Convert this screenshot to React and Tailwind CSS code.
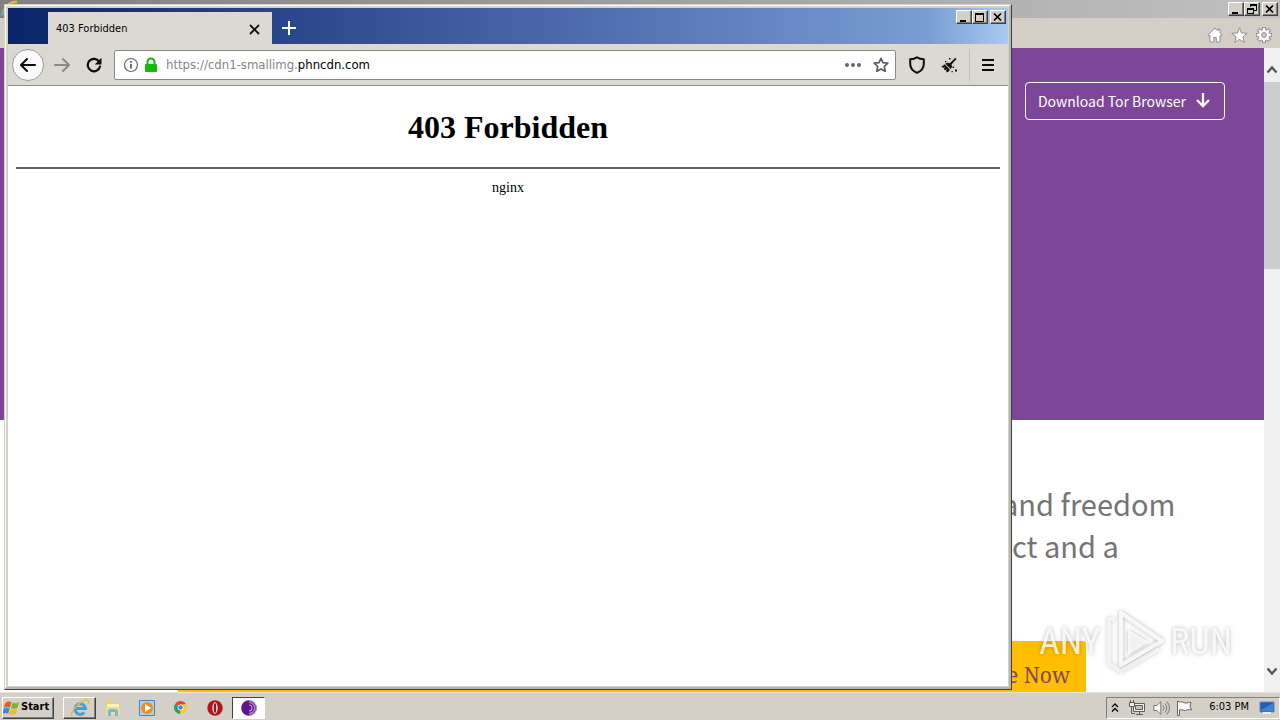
import React from "react";

const ui = "font-['Tahoma','DejaVu_Sans_Condensed','DejaVu_Sans',sans-serif]";
const raised =
  "border border-t-white border-l-white border-r-[#404040] border-b-[#404040] bg-[#d4d0c8] shadow-[inset_-1px_-1px_0_#808080]";

function CaptionButton({ label, className = "", children }) {
  return (
    <button aria-label={label} className={`h-3.5 w-4 flex items-center justify-center ${raised} ${className}`}>
      <svg width="12" height="11" viewBox="0 0 12 11" shapeRendering="crispEdges">{children}</svg>
    </button>
  );
}

const minimise = <path d="M2 8h6v2H2z" fill="#000" />;
const maximise = <path d="M1 1h9v9H1zM2 3v6h7V3z" fill="#000" fillRule="evenodd" />;
const restore = (
  <path d="M4 0h7v7H8V6h2V2H5v1H4zM1 4h7v6H1zM2 6v3h5V6z" fill="#000" fillRule="evenodd" />
);
const cross = <path d="M2 1.5l7 7M9 1.5l-7 7" stroke="#000" strokeWidth="1.7" shapeRendering="auto" />;

function BackgroundBrowser() {
  return (
    <section className="flex flex-1 flex-col bg-white">
      <header className="flex h-[18px] items-center justify-end bg-gradient-to-r from-[#808080] to-[#c0c0c0] pr-0.5">
        <svg className="mr-auto" width="20" height="18" viewBox="0 0 20 18" fill="none">
          <path d="M2 15C5 6 11 1 17 2" stroke="#e8b92c" strokeWidth="2.5" />
          <path d="M1 16C5 8 9 5 13 4" stroke="#4ba4e0" strokeWidth="1.5" />
        </svg>
        <CaptionButton label="Minimize">{minimise}</CaptionButton>
        <CaptionButton label="Restore">{restore}</CaptionButton>
        <CaptionButton label="Close" className="ml-0.5">{cross}</CaptionButton>
      </header>
      <nav className="flex h-[30px] items-center justify-end gap-2 bg-[#d4cec7] pt-1 pr-2">
        <button aria-label="Home">
          <svg width="16" height="16" viewBox="0 0 16 16">
            <path d="M8 1L.8 8l1.300 1.300.9-.8V15h3.700v-4.500h2.600V15H13V8.400l.9.8L15.200 8 13 5.800V2h-2v2z" fill="#fff" stroke="#8b8884" strokeWidth=".9" />
          </svg>
        </button>
        <button aria-label="Favorites">
          <svg width="17" height="17" viewBox="0 0 17 17">
            <path d="M8.500.8l2 5.200 5.700.3-4.400 3.600 1.500 5.600-4.800-3.100-4.800 3.100 1.500-5.600L.8 6.300 6.500 6z" fill="#fff" stroke="#8b8884" strokeWidth=".9" />
          </svg>
        </button>
        <button aria-label="Tools">
          <svg width="16" height="16" viewBox="0 0 16 16" fill="none">
            <path d="M8 0v16M0 8h16M2.300 2.300l11.400 11.400M13.700 2.300L2.300 13.700" stroke="#8b8884" strokeWidth="4" />
            <circle cx="8" cy="8" r="6" fill="#8b8884" />
            <path d="M8 .8v14.400M.8 8h14.400M3 3l10 10M13 3L3 13" stroke="#fff" strokeWidth="2.300" />
            <circle cx="8" cy="8" r="5.200" fill="#fff" />
            <circle cx="8" cy="8" r="2.400" fill="#d4cec7" stroke="#8b8884" />
          </svg>
        </button>
      </nav>
      <div className="flex flex-1">
        <main className="relative flex flex-1 flex-col overflow-hidden font-['Noto_Sans_CJK_SC',sans-serif]">
          <div className="flex h-[372px] items-start justify-end bg-[#7d4698] pt-[34px] pr-[39px]">
            <button className="flex h-[38px] items-center gap-2 rounded-[4px] border border-white px-3 text-[14px] text-white">
              Download Tor Browser
              <svg width="18" height="18" viewBox="0 0 18 18" fill="none" stroke="#fff" strokeWidth="2.300">
                <path d="M9 1v13M3 8l6 6 6-6" />
              </svg>
            </button>
          </div>
          <p className="ml-auto w-[264px] pt-[62px] text-[29px] leading-[42px] text-[#747474]">
            <span className="block pl-0.5">and freedom</span>
            <span className="block pl-3">ct and a</span>
          </p>
          <div className="mt-auto mr-[178px] ml-[178px] flex h-[51px] items-end justify-end rounded-t-[3px] bg-[#ffbf00] px-4 pb-[3px] font-['Noto_Serif','Source_Serif_Pro','Liberation_Serif',serif] text-[21px] leading-7 text-[#84465e]">
            <a href="#donate">Donate Now</a>
          </div>
        </main>
        <aside className="flex w-4 flex-col items-center bg-[#f0f0f0]">
          <button aria-label="Scroll up" className="flex h-[34px] items-end pb-2">
            <svg width="12" height="9" viewBox="0 0 12 9" fill="none"><path d="M1.500 7.500L6 2.500l4.500 5" stroke="#505050" strokeWidth="2.200" /></svg>
          </button>
          <div className="h-[187px] w-full bg-[#cdcdcd]" />
          <button aria-label="Scroll down" className="mt-auto flex h-7 items-start">
            <svg width="12" height="13" viewBox="0 0 12 13" fill="none"><path d="M1.500 4.500L6 9.500l4.500-5" stroke="#505050" strokeWidth="2.200" /></svg>
          </button>
        </aside>
      </div>
    </section>
  );
}

function ForegroundBrowser() {
  return (
    <section className="absolute top-1 right-[268px] bottom-[30px] left-1 flex flex-col border border-t-[#d4d0c8] border-r-[#404040] border-b-[#404040] border-l-[#d4d0c8] bg-white">
      <div className="flex flex-1 flex-col border-t border-r-2 border-b-2 border-l border-t-white border-r-[#b8b5ae] border-b-[#b8b5ae] border-l-white">
        <div className="flex flex-1 flex-col border-t-2 border-r border-b border-l-2 border-[#d4d0c8] bg-white">
          <header className="flex h-9 items-end bg-[linear-gradient(to_right,#0a246a,#4a68ab_55%,#7a9dd4_92%,#a6caf0)]">
            <div className={`ml-10 flex h-8 w-56 items-center justify-between bg-[#dcd9d3] px-2 pt-0.5 text-[11px] text-black ${ui}`}>
              <span>403 Forbidden</span>
              <button aria-label="Close tab" className="p-1">
                <svg width="11" height="11" viewBox="0 0 11 11"><path d="M1 1l9 9M10 1l-9 9" stroke="#111" strokeWidth="1.800" /></svg>
              </button>
            </div>
            <button aria-label="New tab" className="mb-[9px] ml-2.5">
              <svg width="14" height="14" viewBox="0 0 14 14"><path d="M7 0v14M0 7h14" stroke="#fff" strokeWidth="2" /></svg>
            </button>
            <div className="mr-0.5 ml-auto flex self-start pt-0.5">
              <CaptionButton label="Minimize">{minimise}</CaptionButton>
              <CaptionButton label="Maximize">{maximise}</CaptionButton>
              <CaptionButton label="Close" className="ml-0.5">{cross}</CaptionButton>
            </div>
          </header>
          <nav className="flex h-[42px] items-center border-b border-[#8f8d88] bg-[#dcd9d3] pt-px pr-3 pl-1">
            <button aria-label="Back" className="flex size-8 items-center justify-center rounded-full border border-[#9d9b97] bg-[#fafafa]">
              <svg width="16" height="16" viewBox="0 0 16 16" fill="none" stroke="#0c0c0d" strokeWidth="2" strokeLinecap="round" strokeLinejoin="round"><path d="M15 8H1.500M7 2L1 8l6 6" /></svg>
            </button>
            <button aria-label="Forward" className="ml-2.5">
              <svg width="16" height="16" viewBox="0 0 16 16" fill="none" stroke="#8b8985" strokeWidth="2" strokeLinecap="round" strokeLinejoin="round"><path d="M1 8h13.500M9 2l6 6-6 6" /></svg>
            </button>
            <button aria-label="Reload" className="ml-4">
              <svg width="16" height="16" viewBox="0 0 16 16" fill="none"><path d="M13.200 4.700A6.200 6.200 0 1 0 14 9.500" stroke="#0c0c0d" strokeWidth="2.200" strokeLinecap="round" /><path d="M15.500 .8v6.700H8.800z" fill="#0c0c0d" /></svg>
            </button>
            <div className="ml-3 flex h-[30px] flex-1 items-center rounded-[2px] border border-[#8a8986] bg-white pr-1.5 pl-2">
              <button aria-label="Site information">
                <svg width="16" height="16" viewBox="0 0 16 16" fill="none"><circle cx="8" cy="8" r="6.500" stroke="#666" strokeWidth="1.200" /><path d="M8 7v4.500M8 4v1.700" stroke="#555" strokeWidth="1.700" /></svg>
              </button>
              <svg className="ml-1" width="16" height="16" viewBox="0 0 16 16"><path d="M4.500 8V5a3.500 3.500 0 0 1 7 0v3" fill="none" stroke="#12bc00" strokeWidth="2" /><rect x="2" y="7" width="12" height="8" rx="1" fill="#12bc00" /></svg>
              <a href="https://cdn1-smallimg.phncdn.com" className={`ml-[7px] flex-1 text-[13px] text-[#858585] ${ui}`}>
                https://cdn1-smallimg.<span className="text-black">phncdn.com</span>
              </a>
              <button aria-label="Page actions"><svg width="16" height="16" viewBox="0 0 16 16" fill="#666"><circle cx="2" cy="8" r="2" /><circle cx="8" cy="8" r="2" /><circle cx="14" cy="8" r="2" /></svg></button>
              <button aria-label="Bookmark" className="ml-3">
                <svg width="16" height="16" viewBox="0 0 16 16" fill="none"><path d="M8 1.300l2 4.300 4.800.6-3.500 3.300.9 4.800L8 12l-4.200 2.300.9-4.800L1.200 6.200 6 5.600z" stroke="#5c5c5c" strokeWidth="1.700" strokeLinejoin="round" /></svg>
              </button>
            </div>
            <button aria-label="Security level" className="ml-3">
              <svg width="18" height="18" viewBox="0 0 18 18" fill="none"><path d="M9 1.200c2 1.500 4 2 6.800 2.100V8c0 4.500-2.500 7-6.800 8.800C4.700 15 2.200 12.500 2.200 8V3.300C5 3.200 7 2.700 9 1.200z" stroke="#0c0c0d" strokeWidth="2" strokeLinejoin="round" /></svg>
            </button>
            <button aria-label="New identity" className="ml-[15px]">
              <svg width="16" height="16" viewBox="0 0 16 16" fill="#111"><path d="M14.300.8l1.200 1.200-5 5.500c1 1.800.3 3.300-.8 4.500L4.300 6.800c1.300-1.200 3.200-1.500 4.500-.6z" /><path d="M3.700 7.200l5.300 5.500c-.5 1.200-2 2.200-3 2.900L5 14l1-2-2 1.300-1.300-1.300 1.600-2-2.200 1L.3 9.400c1.200-.3 2.400-1.200 3.400-2.200zM8 1h1.500v1.500H8zM4 4h1.300v1.300H4zM14 12.500h2v2h-2zM11.500 9.500H13V11h-1.500zM10.500 14h1.200v1.200h-1.200z" /></svg>
            </button>
            <div className="ml-3 h-8 w-px bg-[#c5c2bc]" />
            <button aria-label="Menu" className="ml-2.5">
              <svg width="16" height="16" viewBox="0 0 16 16"><path d="M2 3h12M2 8h12M2 13h12" stroke="#0c0c0d" strokeWidth="2" /></svg>
            </button>
          </nav>
          <main className="flex-1 px-2 pt-[23px] text-center font-['Liberation_Serif','Times_New_Roman',serif] text-black">
            <h1 className="text-[32px] leading-9 font-bold">403 Forbidden</h1>
            <hr className="mt-[22px] mb-2.5 border-t-2 border-[#606060]" />
            <p className="text-[14px] leading-[18px]">nginx</p>
          </main>
        </div>
      </div>
    </section>
  );
}

function Watermark() {
  return (
    <div className="pointer-events-none absolute right-12 bottom-[46px] flex h-[64px] w-[193px] items-center justify-between font-['Roboto_Condensed','Open_Sans_Condensed','Liberation_Sans_Narrow',sans-serif] text-[36px] text-white/80 drop-shadow-[0_0_2px_rgba(0,0,0,0.35)]">
      <span>ANY</span>
      <svg width="58" height="64" viewBox="0 0 58 64" fill="none" strokeLinejoin="round">
        <path d="M15 3l41 28-41 24z" stroke="#fff" strokeWidth="4" opacity=".85" />
        <path d="M23 21l18 11-18 11z" fill="#fff" stroke="#fff" strokeWidth="2" opacity=".8" />
        <path d="M8 9H3v45l12 7 38-22" stroke="#fff" strokeWidth="4" opacity=".6" />
      </svg>
      <span>RUN</span>
    </div>
  );
}

function Taskbar() {
  const task = "flex h-[22px] w-[33px] items-center justify-center";
  return (
    <footer className={`flex h-7 items-center border-t border-[#e6e3dd] bg-[#d4d0c8] pt-0.5 text-[11px] text-black ${ui}`}>
      <button className={`ml-0.5 flex h-[22px] w-[52px] items-center gap-px font-bold ${raised}`}>
        <svg width="17" height="16" viewBox="0 0 17 16">
          <path d="M2 3.500C4 1 6.500 1 8.500 2.200L7 7.600C5 6.400 2.700 6.800.8 8z" fill="#e45b24" />
          <path d="M9.500 2.700c2.300 1 4.500.8 6.700-.9l-1.500 5.600C12.600 9 10.300 9 8 7.900z" fill="#75b82a" />
          <path d="M.5 9c2-1.500 4.200-1.500 6.200-.4l-1.500 5.200c-2-1.100-4-1-6 .3z" fill="#3e8bd3" />
          <path d="M7.700 9c2.300 1 4.500.8 6.700-.7L13 13.600c-2 1.700-4.500 1.700-6.800.6z" fill="#f4be25" />
        </svg>
        Start
      </button>
      <button aria-label="Internet Explorer" className={`ml-[9px] ${task} ${raised}`}>
        <svg width="20" height="20" viewBox="0 0 20 20" fill="none"><path d="M5.500 10.500h10a5.300 5.300 0 1 0-1.200 4" stroke="#38a5df" strokeWidth="3" /><path d="M2 18.500C-1 14 13 0 18 2c1.200.5.800 2.500.2 3.500" stroke="#e6b93c" strokeWidth="1.500" /></svg>
      </button>
      <button aria-label="Windows Explorer" className={task}>
        <svg width="18" height="18" viewBox="0 0 18 18"><path d="M2 3l6-1 2 2h6v12H2z" fill="#edcf68" /><path d="M3 5h12v4H3z" fill="#fcf2bd" /><path d="M2 8h14v8H2z" fill="#f3dc83" /><path d="M4 17v-5c0-3 10-3 10 0v5h-3v-4H7v4z" fill="#6fb9dc" /></svg>
      </button>
      <button aria-label="Media Player" className={`ml-px ${task}`}>
        <svg width="18" height="18" viewBox="0 0 18 18"><path d="M1.500 1.500h15v15h-15z" fill="#a9d4ef" stroke="#4785b5" /><circle cx="9" cy="9" r="6" fill="#f38a1d" /><path d="M7 5l6 4-6 4z" fill="#fff" /></svg>
      </button>
      <button aria-label="Chrome" className={`ml-px ${task}`}>
        <svg width="13" height="13" viewBox="0 0 16 16"><path d="M8 8L1.100 4A8 8 0 0 1 15 4z" fill="#e34335" /><path d="M8 8L1.100 4A8 8 0 0 0 8 16l3.500-6z" fill="#2e9e50" /><path d="M8 8l-.5 8A8 8 0 0 0 15 4H8z" fill="#f8ca38" /><circle cx="8" cy="8" r="3.600" fill="#fff" /><circle cx="8" cy="8" r="2.800" fill="#4285e8" /></svg>
      </button>
      <button aria-label="Opera" className={`ml-px ${task}`}>
        <svg width="16" height="16" viewBox="0 0 16 16"><circle cx="8" cy="8" r="7.700" fill="#b41519" /><ellipse cx="8" cy="8" rx="2.600" ry="5.700" fill="#fff" /><ellipse cx="8" cy="8" rx="1.300" ry="5" fill="#a11317" /></svg>
      </button>
      <button aria-label="Tor Browser" className={`ml-px ${task} border border-t-[#404040] border-r-white border-b-white border-l-[#404040] bg-white`}>
        <svg width="16" height="16" viewBox="0 0 16 16" fill="none"><circle cx="8" cy="8" r="7.800" fill="#5b1688" /><path d="M8 2.500a5.500 5.500 0 0 1 0 11M8 5a3 3 0 0 1 0 6M8 .7a7.300 7.300 0 0 1 0 14.600" stroke="#c29be0" strokeWidth="1.100" /></svg>
      </button>
      <div className="ml-auto flex h-[22px] w-[174px] items-center border border-t-[#808080] border-r-white border-b-white border-l-[#808080] pr-1 pl-1">
        <button aria-label="Show hidden icons"><svg width="8" height="10" viewBox="0 0 8 10" fill="none" stroke="#000" strokeWidth="1.300"><path d="M1 4l3-3 3 3M1 8.500l3-3 3 3" /></svg></button>
        <svg className="ml-2.5" width="16" height="16" viewBox="0 0 16 16" fill="none" stroke="#5f5c58"><path d="M4.500 3.500h11v8h-11z" fill="#eee" /><path d="M6.500 5.500h7v4h-7z" fill="#c5c2bc" /><path d="M7 14.500h7M10.500 12v2" /><path d="M.5 2.500h5v4h-5z" fill="#eee" /><path d="M1.500 0v2M4.500 0v2M2.500 7v6.500H6" /></svg>
        <svg className="ml-2" width="17" height="16" viewBox="0 0 17 16" fill="none" stroke="#777"><path d="M.8 5.500h3l4-4v13l-4-4h-3z" fill="#f6f6f6" /><path d="M10 5.500q2 2.500 0 5M12 3.500q3.500 4.500 0 9M14 1.500q5 6.500 0 13" /></svg>
        <svg className="ml-1.5" width="17" height="16" viewBox="0 0 17 16"><path d="M1.500 1v14.500h2V10c3-1 4 1 6 .5 2-.5 2.500-1.500 6-.5L14 6l1-3.500c-2-.5-3 .5-5 .500-2.500 0-4-2-6.500-1z" fill="#f8f8f8" stroke="#66635f" /></svg>
        <time className="ml-auto">6:03 PM</time>
        <svg className="ml-2.5" width="16" height="15" viewBox="0 0 16 15"><path d="M1 2h14v10H1z" fill="#255cad" stroke="#6588b5" /><path d="M2 10L14 3v8H2z" fill="#3c85d5" /><path d="M4 13h8" stroke="#eee" strokeWidth="2" /></svg>
      </div>
    </footer>
  );
}

export default function App() {
  return (
    <div className="relative flex min-h-screen flex-col overflow-hidden bg-white">
      <BackgroundBrowser />
      <ForegroundBrowser />
      <Watermark />
      <Taskbar />
    </div>
  );
}
